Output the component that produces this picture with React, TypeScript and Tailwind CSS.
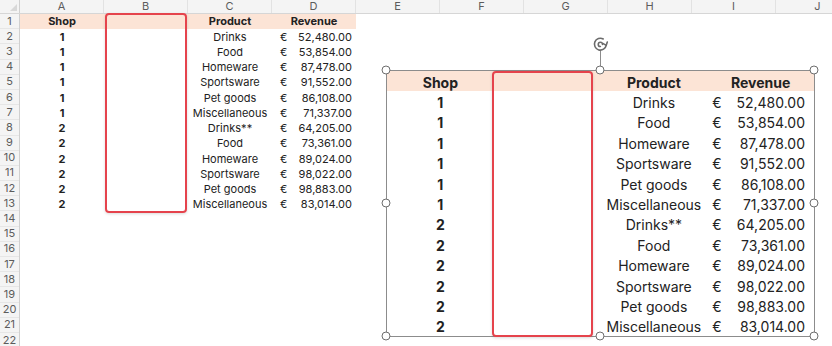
import React from "react";

const rows: [number, string, string][] = [
  [1, "Drinks", "52,480.00"],
  [1, "Food", "53,854.00"],
  [1, "Homeware", "87,478.00"],
  [1, "Sportsware", "91,552.00"],
  [1, "Pet goods", "86,108.00"],
  [1, "Miscellaneous", "71,337.00"],
  [2, "Drinks**", "64,205.00"],
  [2, "Food", "73,361.00"],
  [2, "Homeware", "89,024.00"],
  [2, "Sportsware", "98,022.00"],
  [2, "Pet goods", "98,883.00"],
  [2, "Miscellaneous", "83,014.00"],
];

const cols = ["A", "B", "C", "D", "E", "F", "G", "H", "I", "J"];

const sizes = {
  sm: {
    row: "h-[15.25px] text-[11px]",
    col: "w-[84px]",
    eur: "pl-[8px]",
    num: "pr-[4px]",
  },
  lg: {
    row: "h-[20.4px] text-[14px] pt-[2px]",
    col: "w-[107.25px]",
    eur: "pl-[5px]",
    num: "pr-[9px]",
  },
};

function ShopTable({ size }: { size: "sm" | "lg" }) {
  const s = sizes[size];
  return (
    <div className="flex flex-col text-[#222]">
      <div className={`flex items-center bg-[#fce4d6] font-bold ${s.row}`}>
        <div className={`text-center ${s.col}`}>Shop</div>
        <div className={s.col} />
        <div className={`text-center ${s.col}`}>Product</div>
        <div className={`text-center ${s.col}`}>Revenue</div>
      </div>
      {rows.map(([shop, product, revenue], i) => (
        <div key={i} className={`flex items-center ${s.row}`}>
          <div className={`text-center font-bold ${s.col}`}>{shop}</div>
          <div className={s.col} />
          <div className={`text-center ${s.col}`}>{product}</div>
          <div className={`flex justify-between ${s.col}`}>
            <span className={s.eur}>€</span>
            <span className={s.num}>{revenue}</span>
          </div>
        </div>
      ))}
    </div>
  );
}

function Handle({ className }: { className: string }) {
  return (
    <div
      className={`absolute h-[9px] w-[9px] -translate-x-1/2 -translate-y-1/2 rounded-full border border-[#6e6e6e] bg-white ${className}`}
    />
  );
}

export default function App() {
  return (
    <div className="relative h-[346px] w-[832px] overflow-hidden bg-white font-['Inter','Liberation_Sans',sans-serif]">
      {/* column letters */}
      <div className="flex h-[14px] border-b border-[#d6d6d6] bg-[#f4f4f4] text-[11px] text-[#5c5c5c]">
        <div className="relative w-[20px] shrink-0 border-r border-[#d0d0d0]">
          <div className="absolute bottom-[2px] right-[2px] h-0 w-0 border-b-[7px] border-l-[7px] border-b-[#d8d8d8] border-l-transparent" />
        </div>
        {cols.map((c) => (
          <div
            key={c}
            className="flex w-[84px] shrink-0 items-center justify-center border-r border-[#e2e2e2] leading-none"
          >
            {c}
          </div>
        ))}
      </div>

      <div className="flex">
        {/* row numbers */}
        <div className="flex w-[20px] shrink-0 flex-col border-r border-[#d0d0d0] bg-[#f4f4f4] text-[11px] text-[#5c5c5c]">
          {Array.from({ length: 22 }, (_, i) => (
            <div
              key={i}
              className="flex h-[15.2px] shrink-0 items-center justify-center border-b border-[#e6e6e6] leading-none"
            >
              {i + 1}
            </div>
          ))}
        </div>
        <ShopTable size="sm" />
      </div>

      {/* highlighted empty column, sheet */}
      <div className="absolute left-[105px] top-[13px] h-[200px] w-[82px] rounded-[4px] border-2 border-[#e5434c] shadow-[0_1px_3px_rgba(0,0,0,0.15)]" />

      {/* pasted picture */}
      <div className="absolute left-[386px] top-[70px] h-[267px] w-[429px] border border-[#8c8c8c] bg-white">
        <ShopTable size="lg" />
        <div className="absolute left-[105px] top-[0px] h-[266px] w-[101px] rounded-[4px] border-2 border-[#e5434c] shadow-[0_1px_3px_rgba(0,0,0,0.15)]" />
      </div>

      {/* rotation handle */}
      <div className="absolute left-[600px] top-[51px] h-[19px] w-px bg-[#8c8c8c]" />
      <svg
        className="absolute left-[592px] top-[36px]"
        width="17"
        height="17"
        viewBox="0 0 16 16"
        fill="none"
        stroke="#6b6b6b"
        strokeWidth="1.5"
        strokeLinecap="round"
      >
        <path d="M13.4 8.6A5.6 5.6 0 1 1 10.6 2.8" />
        <path d="M7.9 9.9A2 2 0 1 1 9.9 7.9" />
        <path d="M14.4 5.6L13.4 8.8L10.6 7.2" strokeLinejoin="round" />
      </svg>

      <Handle className="left-[386px] top-[70px]" />
      <Handle className="left-[600px] top-[70px]" />
      <Handle className="left-[814px] top-[70px]" />
      <Handle className="left-[386px] top-[203px]" />
      <Handle className="left-[814px] top-[203px]" />
      <Handle className="left-[386px] top-[336px]" />
      <Handle className="left-[600px] top-[336px]" />
      <Handle className="left-[814px] top-[336px]" />
    </div>
  );
}
